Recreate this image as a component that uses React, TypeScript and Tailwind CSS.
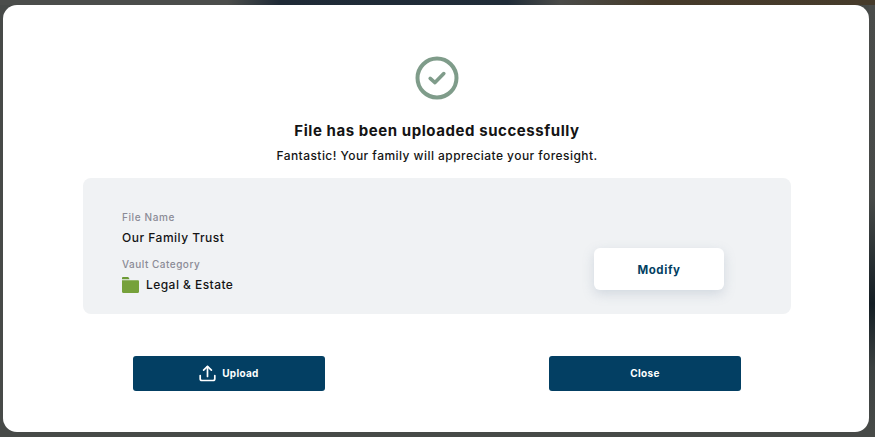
import React from "react";

const sans = "font-['Inter','Liberation_Sans',sans-serif]";

const App: React.FC = () => {
  return (
    <div
      className={`${sans} relative h-[437px] w-[875px] overflow-hidden bg-[#474a48] pb-[5px] pl-[3px] pr-[6px] pt-[5px]`}
    >
      {/* blurred page behind the modal */}
      <div className="absolute left-0 top-0 h-[5px] w-full bg-[linear-gradient(90deg,#4b4d4b_0%,#4b4d4b_26%,#1f2a36_32%,#202c38_58%,#4a4b48_64%,#453a2a_75%,#463b2b_100%)]" />
      <div className="absolute right-0 top-[5px] h-[427px] w-[6px] bg-[linear-gradient(180deg,#4a4c4a_0%,#474a48_45%,#141e24_70%,#3c4141_85%,#474a48_100%)]" />

      {/* Modal */}
      <div className="relative flex h-[427px] w-[866px] flex-col items-center rounded-[14px] bg-white pl-[2px] pt-[51px]">
        <svg width="44" height="44" viewBox="0 0 44 44" fill="none" className="shrink-0">
          <circle cx="22" cy="22" r="19.5" stroke="#7f9c8a" strokeWidth="4" />
          <path
            d="M15.2 22.4 L20 26.6 L28.8 17.6"
            stroke="#7f9c8a"
            strokeWidth="3.6"
            strokeLinecap="round"
            strokeLinejoin="round"
          />
        </svg>

        <h1 className="mt-[21px] text-[15px] font-bold leading-[20px] tracking-[0.56px] text-[#141414]">
          File has been uploaded successfully
        </h1>
        <p className="mt-[7px] text-[12px] font-medium leading-[16px] tracking-[0.45px] text-[#141414]">
          Fantastic! Your family will appreciate your foresight.
        </p>

        {/* File details */}
        <div className="mt-[14px] flex h-[136px] w-[708px] items-start justify-between rounded-[8px] bg-[#f0f2f4] pl-[39px] pr-[67px] pt-[33px]">
          <div>
            <div className="text-[10px] font-medium leading-[12px] tracking-[0.6px] text-[#8b8b96]">
              File Name
            </div>
            <div className="mt-[7px] text-[12px] font-medium leading-[16px] tracking-[0.5px] text-[#141414]">
              Our Family Trust
            </div>
            <div className="mt-[12px] text-[10px] font-medium leading-[12px] tracking-[0.5px] text-[#8b8b96]">
              Vault Category
            </div>
            <div className="mt-[6px] flex items-center gap-[7px]">
              <svg width="17" height="16" viewBox="0 0 17 15" preserveAspectRatio="none" className="shrink-0">
                <path
                  d="M0 1.2C0 .5.5 0 1.2 0h4.6c.4 0 .7.2.9.5L7.6 2H0Z"
                  fill="#6c9a35"
                />
                <path
                  d="M0 3h15.9c.6 0 1.1.5 1.1 1.1v9.8c0 .6-.5 1.1-1.1 1.1H1.1C.5 15 0 14.5 0 13.9Z"
                  fill="#76a13a"
                />
              </svg>
              <span className="pt-[1px] text-[12px] font-medium leading-[16px] tracking-[0.45px] text-[#141414]">
                Legal &amp; Estate
              </span>
            </div>
          </div>

          <button className="mt-[37px] flex h-[42px] w-[130px] items-center justify-center rounded-[6px] bg-white pt-[3px] text-[11.5px] font-bold tracking-[0.6px] text-[#033f63] shadow-[0_4px_12px_rgba(120,140,165,0.25)]">
            Modify
          </button>
        </div>

        {/* Actions */}
        <div className="mt-[42px] flex w-[608px] justify-between">
          <button className="flex h-[35px] w-[192px] items-center justify-center gap-[6px] rounded-[3px] bg-[#033f63] text-[10px] font-bold tracking-[0.3px] text-white">
            <svg
              width="17"
              height="17"
              viewBox="0 0 17 17"
              fill="none"
              stroke="white"
              strokeWidth="1.7"
              strokeLinecap="round"
              strokeLinejoin="round"
            >
              <path d="M1.2 10.5v3.2c0 1 .8 1.8 1.8 1.8h11c1 0 1.8-.8 1.8-1.8v-3.2" />
              <path d="M8.5 11.5V1.5" />
              <path d="M4.6 5.2 8.5 1.3l3.9 3.9" />
            </svg>
            <span>Upload</span>
          </button>
          <button className="flex h-[35px] w-[192px] items-center justify-center rounded-[3px] bg-[#033f63] text-[10px] font-bold tracking-[0.3px] text-white">
            Close
          </button>
        </div>
      </div>
    </div>
  );
};

export default App;
